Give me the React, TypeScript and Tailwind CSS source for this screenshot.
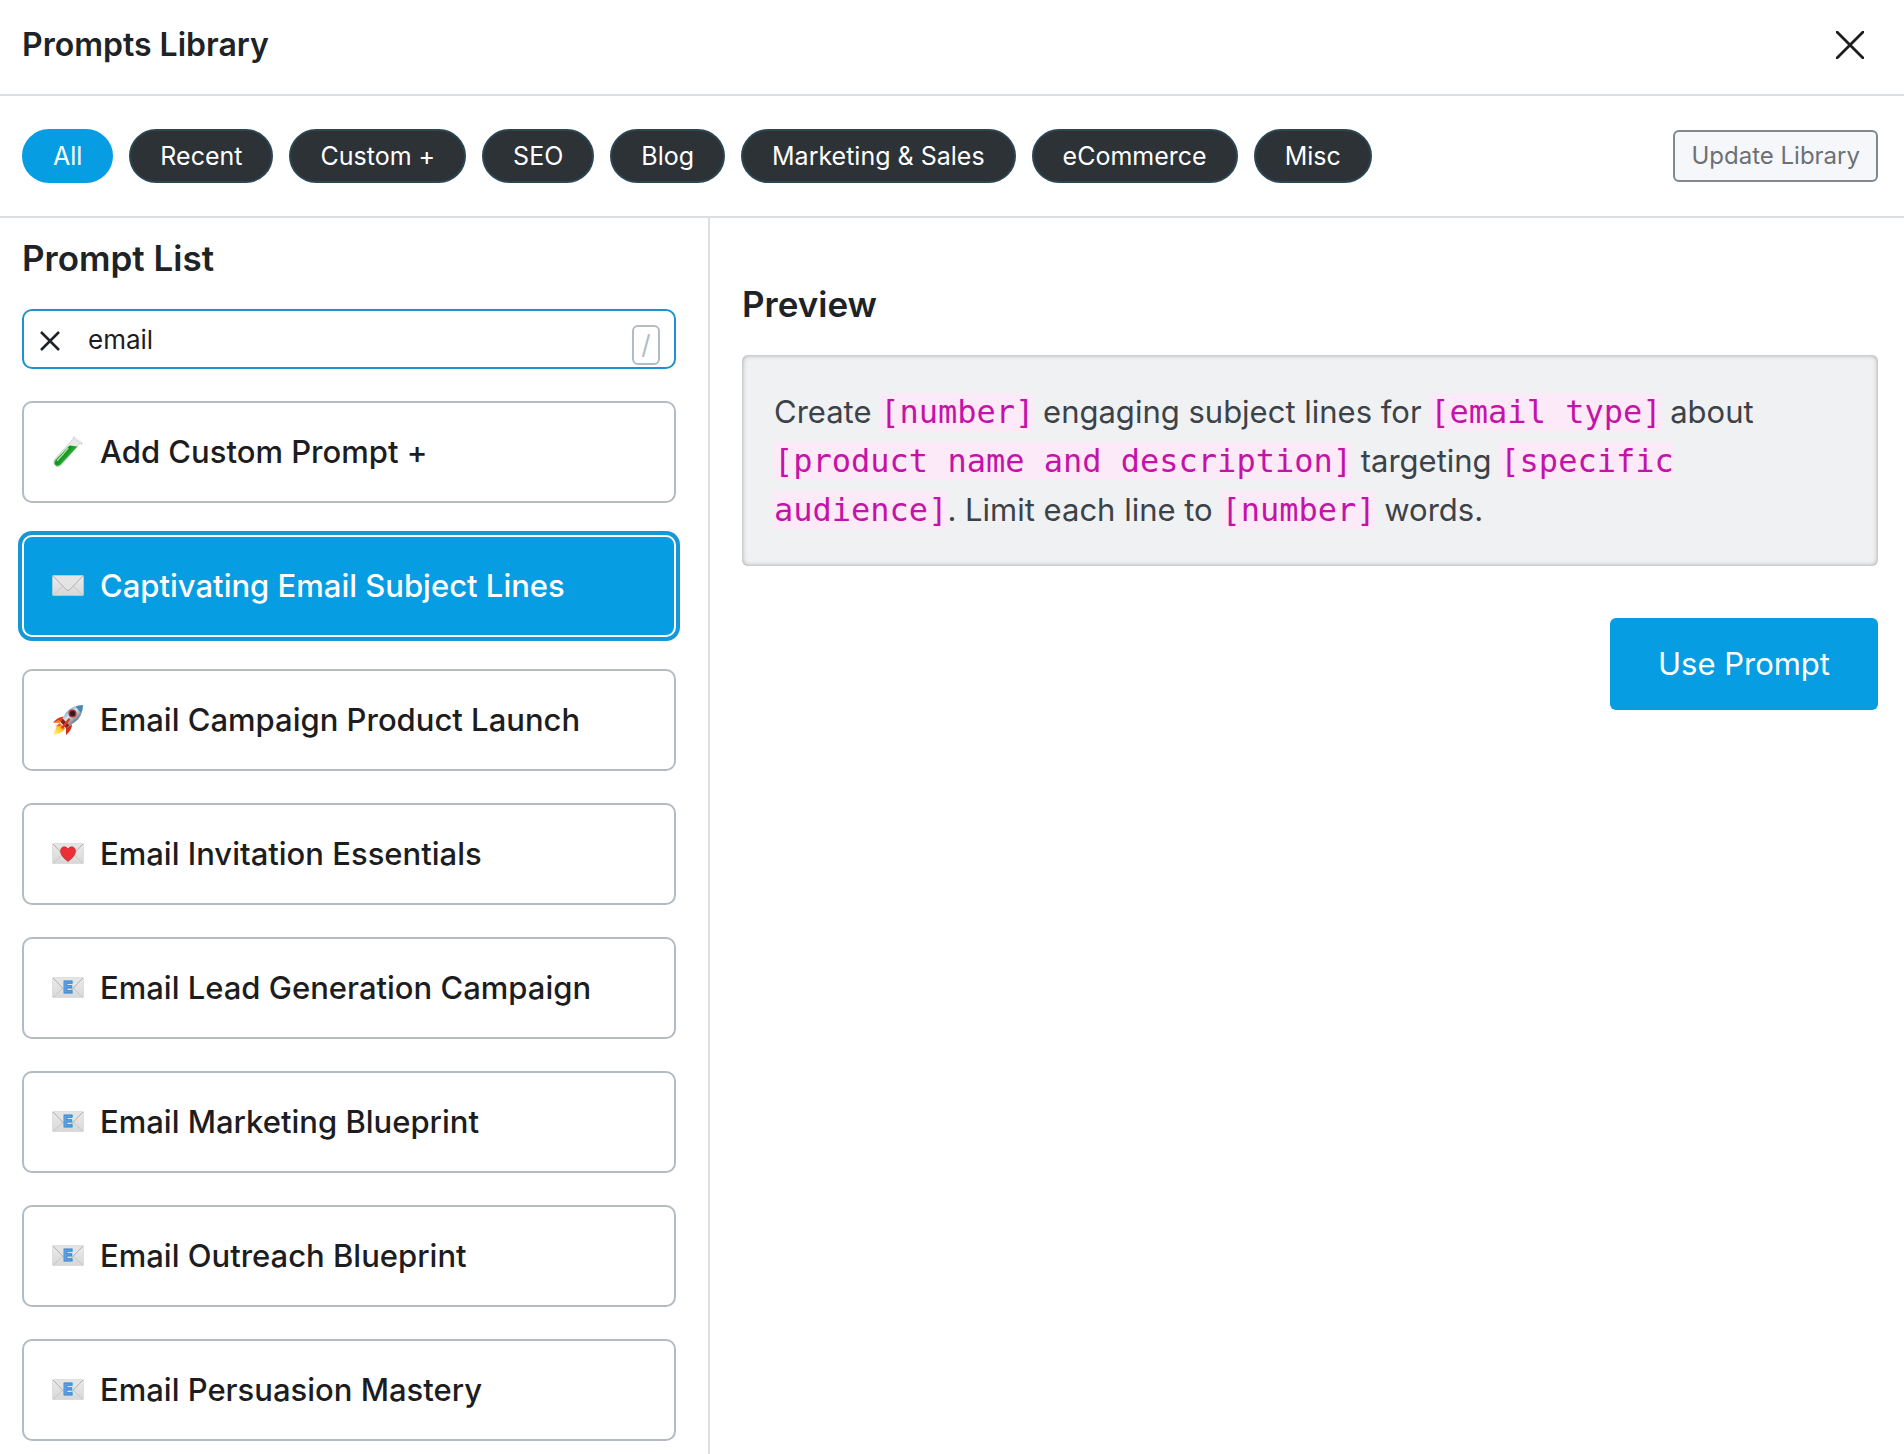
import React, { useState } from "react";

type IconKind = "tube" | "envelope" | "rocket" | "love" | "email";

type Prompt = {
  icon: IconKind;
  title: string;
};

const categories = [
  "All",
  "Recent",
  "Custom +",
  "SEO",
  "Blog",
  "Marketing & Sales",
  "eCommerce",
  "Misc",
];

const prompts: Prompt[] = [
  { icon: "tube", title: "Add Custom Prompt +" },
  { icon: "envelope", title: "Captivating Email Subject Lines" },
  { icon: "rocket", title: "Email Campaign Product Launch" },
  { icon: "love", title: "Email Invitation Essentials" },
  { icon: "email", title: "Email Lead Generation Campaign" },
  { icon: "email", title: "Email Marketing Blueprint" },
  { icon: "email", title: "Email Outreach Blueprint" },
  { icon: "email", title: "Email Persuasion Mastery" },
];

const TubeIcon = () => (
  <svg viewBox="0 0 32 32" className="size-8 shrink-0" aria-hidden="true">
    <defs>
      <linearGradient id="tube-liquid" x1="8" y1="16" x2="16" y2="23" gradientUnits="userSpaceOnUse">
        <stop offset="0" stopColor="#5ccb5f" />
        <stop offset="0.4" stopColor="#0f8f1c" />
        <stop offset="1" stopColor="#2fb83a" />
      </linearGradient>
    </defs>
    <path d="M22 2 28 7 9 29.500Q5.500 32 3 29.500 0.500 27 2.500 23.500Z" fill="#e6ebe8" stroke="#c3cbc7" strokeWidth="0.800" />
    <path d="M17.500 9.500 25.500 10.500 8.500 28.800Q5.500 31 3.500 29Q1.500 27 3.200 24Z" fill="url(#tube-liquid)" />
    <path d="M16 12.500 5.500 24.500" stroke="#a6e6a4" strokeWidth="1.200" strokeLinecap="round" />
    <path d="m22 1.500 7.500 6" stroke="#cfd6d2" strokeWidth="2.200" strokeLinecap="round" />
    <path d="m22.500 1.800 6 4.800" stroke="#f7f9f8" strokeWidth="1" strokeLinecap="round" />
  </svg>
);

const RocketIcon = () => (
  <svg viewBox="0 0 32 32" className="size-8 shrink-0" aria-hidden="true">
    <defs>
      <linearGradient id="rocket-body" x1="12" y1="8" x2="22" y2="19" gradientUnits="userSpaceOnUse">
        <stop offset="0" stopColor="#6f9dc0" />
        <stop offset="0.450" stopColor="#dbe6ee" />
        <stop offset="1" stopColor="#6d7782" />
      </linearGradient>
      <linearGradient id="rocket-flame" x1="2" y1="30" x2="11" y2="20" gradientUnits="userSpaceOnUse">
        <stop offset="0" stopColor="#fff27a" />
        <stop offset="0.600" stopColor="#ffc72e" />
        <stop offset="1" stopColor="#e8590c" />
      </linearGradient>
    </defs>
    <path d="M12 12.500Q6 12.500 1 18.500L8 18.500Z" fill="#e8341c" />
    <path d="M20 20.500Q20 26 14 31L14 24Z" fill="#d42a18" />
    <path d="M1 18.500 7 16 8.500 19Z" fill="#ff8a1f" />
    <path d="M8 19Q4 21 1.500 31Q10 29.500 13 24.500Z" fill="url(#rocket-flame)" />
    <path d="M3.500 22.500 7 19.500 9 21.500Z" fill="#f0641b" />
    <path d="M31 1Q20 1 14 8.500L8.500 18 14 24 23 18Q31 12 31 1Z" fill="url(#rocket-body)" />
    <path d="M31 1Q27 1 23.500 2.600L29 9Q31 5 31 1Z" fill="#4c86b5" />
    <path d="m8.500 18 2-3.500 7 7L14 24Z" fill="#7e2420" />
    <circle cx="20.500" cy="9.500" r="4" fill="#b42a26" />
    <circle cx="20.500" cy="9.500" r="2.500" fill="#2c1a22" />
    <path d="m17 15.500-6.500 8" stroke="#e23a22" strokeWidth="2.400" strokeLinecap="round" />
  </svg>
);

const EnvelopeIcon = ({ kind }: { kind: IconKind }) => (
  <svg viewBox="0 0 32 32" className="size-8 shrink-0" aria-hidden="true">
    <defs>
      <linearGradient id="envelope-paper" x1="0" y1="5" x2="0" y2="27" gradientUnits="userSpaceOnUse">
        <stop offset="0" stopColor="#ececec" />
        <stop offset="1" stopColor="#d6d6d6" />
      </linearGradient>
    </defs>
    <rect x="0.500" y="5.500" width="31" height="20" rx="0.800" fill="url(#envelope-paper)" stroke="#d2d2d2" strokeWidth="0.600" />
    <path d="M1 25.500 12 15M31 25.500 20 15" stroke="#c4c4c4" strokeWidth="0.900" fill="none" />
    <path d="M1 6 14 19.500Q16 21.500 18 19.500L31 6" fill="#e4e4e4" stroke="#b0b0b0" strokeWidth="1" />
    {kind === "love" && (
      <path
        d="M16 23.500C12 20.500 8.500 17 8.500 13C8.500 8.300 14 7.300 16 11C18 7.300 23.500 8.300 23.500 13C23.500 17 20 20.500 16 23.500Z"
        fill="#ea3036"
        stroke="#cf2229"
        strokeWidth="0.600"
      />
    )}
    {kind === "email" && (
      <text
        x="16"
        y="21"
        textAnchor="middle"
        fontSize="16"
        fontWeight="800"
        fill="#5ba6ea"
        stroke="#3f86cc"
        strokeWidth="0.900"
        className="font-['Inter',sans-serif]"
      >
        E
      </text>
    )}
  </svg>
);

const PromptIcon = ({ kind }: { kind: IconKind }) => {
  if (kind === "tube") return <TubeIcon />;
  if (kind === "rocket") return <RocketIcon />;
  return <EnvelopeIcon kind={kind} />;
};

const Variable = ({ children }: { children: React.ReactNode }) => (
  <code className="bg-[#fdeaf8] font-['DejaVu_Sans_Mono',monospace] text-[32px] leading-none text-[#c413a8]">
    {children}
  </code>
);

export default function App() {
  const [category, setCategory] = useState("All");
  const [selected, setSelected] = useState(1);
  const [query, setQuery] = useState("email");

  return (
    <div className="flex min-h-screen flex-col bg-white font-['Inter',sans-serif] text-[#1d2327]">
      <header className="flex h-24 items-center justify-between border-b-2 border-[#dcdfe2] pr-10 pb-1 pl-[22px]">
        <h1 className="text-[32px] leading-9 font-semibold">Prompts Library</h1>
        <button type="button" aria-label="Close" className="flex size-7 items-center justify-center text-[#1d1d1f]">
          <svg viewBox="0 0 28 28" className="size-7" fill="none" stroke="currentColor" strokeWidth="2.800" strokeLinecap="round">
            <path d="m1 1 26 26M27 1 1 27" />
          </svg>
        </button>
      </header>

      <nav className="flex items-center justify-between gap-4 border-b-2 border-[#dcdfe2] py-[33px] pr-[26px] pl-[22px]">
        <div className="flex flex-wrap gap-4">
          {categories.map((name) => (
            <button
              key={name}
              type="button"
              onClick={() => setCategory(name)}
              className={
                name === category
                  ? "h-[54px] rounded-full border-2 border-[#069de3] bg-[#069de3] px-[29px] text-[25px] leading-8 text-white"
                  : "h-[54px] rounded-full border-2 border-[#2c4654] bg-[#2c3236] px-[29px] text-[25px] leading-8 text-white"
              }
            >
              {name}
            </button>
          ))}
        </div>
        <button
          type="button"
          className="h-[52px] shrink-0 rounded-md border-2 border-[#82878c] bg-[#f6f7fa] px-4 text-[24px] leading-8 text-[#6c7176]"
        >
          Update Library
        </button>
      </nav>

      <main className="flex flex-1">
        <section className="w-full max-w-[710px] border-r-2 border-[#dcdfe2] pt-[18px] pr-8 pb-3 pl-[22px]">
          <h2 className="text-[35px] leading-[44px] font-semibold">Prompt List</h2>

          <div className="relative mt-[29px]">
            <input
              type="text"
              aria-label="Search prompts"
              value={query}
              onChange={(e) => setQuery(e.target.value)}
              className="block h-[60px] w-full rounded-[10px] border-2 border-[#1c92d2] bg-white pr-14 pl-16 text-[26px] leading-8 text-[#1d1d1f] outline-none"
            />
            <button
              type="button"
              aria-label="Clear search"
              onClick={() => setQuery("")}
              className="absolute top-[22px] left-[18px] text-[#1d2327]"
            >
              <svg viewBox="0 0 20 20" className="size-5" fill="none" stroke="currentColor" strokeWidth="2.500">
                <path d="m1 1 18 18M19 1 1 19" />
              </svg>
            </button>
            <kbd className="absolute top-4 right-4 flex h-10 w-7 items-center justify-center rounded-md border-2 border-[#b4bbc3] font-['Inter',sans-serif] text-[26px] leading-8 text-[#b4bbc3]">
              /
            </kbd>
          </div>

          <ul className="mt-8 flex flex-col gap-8">
            {prompts.map((p, i) => (
              <li key={p.title}>
                <button
                  type="button"
                  onClick={() => setSelected(i)}
                  className={
                    i === selected
                      ? "flex h-[102px] w-full items-center gap-4 rounded-[10px] border-2 border-white bg-[#069de3] px-7 text-left text-[31px] leading-10 font-medium text-white ring-4 ring-[#1597d8]"
                      : "flex h-[102px] w-full items-center gap-4 rounded-[10px] border-2 border-[#b4bbc3] bg-white px-7 text-left text-[31px] leading-10 font-medium text-[#1d1d1f]"
                  }
                >
                  <PromptIcon kind={p.icon} />
                  <span>{p.title}</span>
                </button>
              </li>
            ))}
          </ul>
        </section>

        <section className="min-w-0 flex-1 pt-16 pr-[26px] pl-8">
          <h2 className="text-[35px] leading-[44px] font-semibold">Preview</h2>

          <p className="mt-[29px] rounded-md bg-[#f0f1f3] px-8 py-8 text-[31px] leading-[49px] text-[#3c4348] shadow-[inset_0_0_5px_rgba(0,0,0,0.35)]">
            Create <Variable>[number]</Variable> engaging subject lines for{" "}
            <Variable>[email type]</Variable> about{" "}
            <Variable>[product name and description]</Variable> targeting{" "}
            <Variable>[specific audience]</Variable>. Limit each line to{" "}
            <Variable>[number]</Variable> words.
          </p>

          <div className="mt-[52px] flex justify-end">
            <button
              type="button"
              className="h-[92px] rounded-md bg-[#069de3] px-12 text-[31px] leading-10 text-white"
            >
              Use Prompt
            </button>
          </div>
        </section>
      </main>
    </div>
  );
}
